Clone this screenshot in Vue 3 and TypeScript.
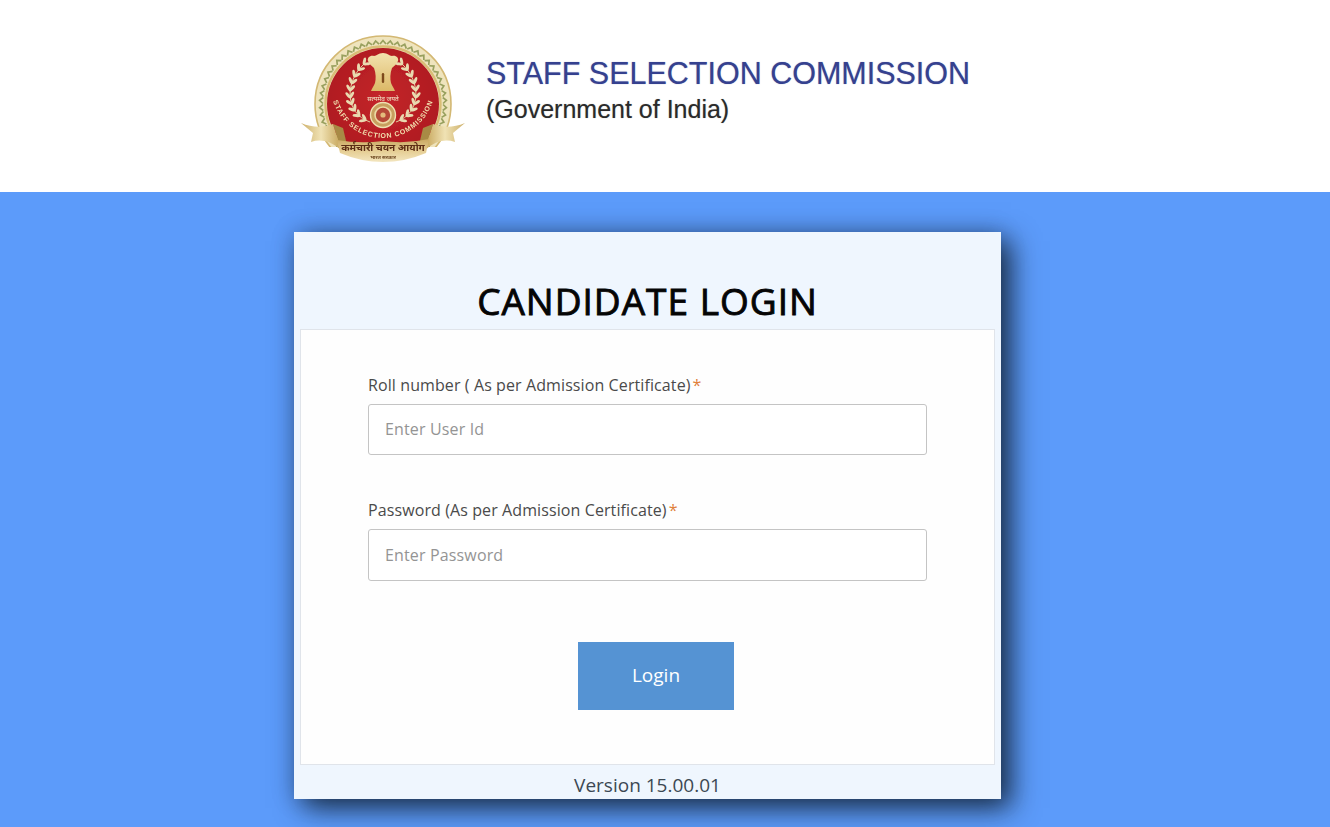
<script setup lang="ts">
import { ref } from 'vue'

interface Leaf {
  x: number
  y: number
  angle: number
}

const rollNumber = ref<string>('')
const password = ref<string>('')

const chevrons: number[] = Array.from({ length: 54 }, (_, i) => (i * 360) / 54)

// One half of the wreath: leaf pairs set along a cubic curve.
const curve: number[][] = [[70, 89], [44, 80], [45, 48], [64, 31]]
const leaves: Leaf[] = Array.from({ length: 10 }, (_, i) => {
  const t = 0.06 + i * 0.104
  const u = 1 - t
  const [a, b, c, d] = curve
  const x = u * u * u * a[0] + 3 * u * u * t * b[0] + 3 * u * t * t * c[0] + t * t * t * d[0]
  const y = u * u * u * a[1] + 3 * u * u * t * b[1] + 3 * u * t * t * c[1] + t * t * t * d[1]
  const dx = 3 * u * u * (b[0] - a[0]) + 6 * u * t * (c[0] - b[0]) + 3 * t * t * (d[0] - c[0])
  const dy = 3 * u * u * (b[1] - a[1]) + 6 * u * t * (c[1] - b[1]) + 3 * t * t * (d[1] - c[1])
  return { x, y, angle: (Math.atan2(dy, dx) * 180) / Math.PI }
})
</script>

<template>
  <div class="page">
    <header class="header">
      <div class="brand">
        <svg class="emblem" width="170" height="131" viewBox="0 0 170 131" aria-hidden="true">
          <defs>
            <radialGradient id="red" cx="0.5" cy="0.45" r="0.6">
              <stop offset="0" stop-color="#c4262b" />
              <stop offset="1" stop-color="#ac181e" />
            </radialGradient>
            <linearGradient id="band" x1="0" y1="0" x2="0" y2="1">
              <stop offset="0" stop-color="#c9a862" />
              <stop offset="0.55" stop-color="#e6cf96" />
              <stop offset="1" stop-color="#f3e6c0" />
            </linearGradient>
            <linearGradient id="wingL" x1="0" y1="0" x2="1" y2="0">
              <stop offset="0" stop-color="#cdb06a" />
              <stop offset="0.5" stop-color="#f0e2b4" />
              <stop offset="1" stop-color="#c6a559" />
            </linearGradient>
            <linearGradient id="ash" x1="0" y1="0" x2="0" y2="1">
              <stop offset="0" stop-color="#f2e2ae" />
              <stop offset="1" stop-color="#dcb867" />
            </linearGradient>
            <clipPath id="aboveBand">
              <rect x="0" y="0" width="170" height="114" />
            </clipPath>
            <path id="arc" d="M31.8 44A52 52 0 1 0 134.2 44" fill="none" />
            <filter id="soft" x="-5%" y="-5%" width="110%" height="110%">
              <feGaussianBlur stdDeviation="0.45" />
            </filter>
            <g id="wreath">
              <path d="M70 89C44 80 45 48 64 31" fill="none" stroke="#e0cf9f" stroke-width="1" />
              <g fill="#e9dab0">
                <template v-for="(l, i) in leaves" :key="i">
                  <ellipse
                    :cx="l.x"
                    :cy="l.y"
                    rx="3.8"
                    ry="1.5"
                    :transform="`rotate(${l.angle - 36} ${l.x} ${l.y}) translate(3 0)`"
                  />
                  <ellipse
                    :cx="l.x"
                    :cy="l.y"
                    rx="3.8"
                    ry="1.5"
                    :transform="`rotate(${l.angle + 36} ${l.x} ${l.y}) translate(3 0)`"
                  />
                </template>
              </g>
            </g>
            <path id="wing" d="M1 90Q18 97 33 91L41 117Q26 104 11 109L13 100Z" />
          </defs>
          <g filter="url(#soft)">
            <g clip-path="url(#aboveBand)">
              <circle cx="83" cy="71" r="68" fill="#efe4bd" stroke="#d3b873" stroke-width="1.6" />
              <g fill="none" stroke="#98a05e" stroke-width="1.7">
                <path
                  v-for="a in chevrons"
                  :key="a"
                  d="M80 11L83 7.5L86 11"
                  :transform="`rotate(${a} 83 71)`"
                />
              </g>
              <circle cx="83" cy="71" r="57.5" fill="none" stroke="#d9bd76" stroke-width="2.4" />
              <circle cx="83" cy="71" r="56" fill="url(#red)" />
            </g>

            <path
              d="M83 20C78 20 77 23 74 23C70 22 67 25 68 28C69 31 72 33 74 35C76 40 76 46 75 50C74 53 72 55 71 58L95 58C94 55 92 53 91 50C90 46 90 40 92 35C94 33 97 31 98 28C99 25 96 22 92 23C89 23 88 20 83 20Z"
              fill="url(#ash)"
            />
            <rect x="81.8" y="40" width="2.4" height="10" rx="1.2" fill="#7d4a1d" />

            <text x="83" y="68" text-anchor="middle" class="motto">सत्यमेव जयते</text>

            <use href="#wreath" />
            <use href="#wreath" transform="translate(166 0) scale(-1 1)" />

            <circle cx="83" cy="82" r="12.5" fill="#c79f5e" stroke="#efe0b2" stroke-width="1.4" />
            <circle cx="83" cy="82" r="8" fill="#b64a38" stroke="#ecd9a4" stroke-width="1.6" />
            <circle cx="83" cy="82" r="2.6" fill="#e3bc7c" />

            <text class="arc-text">
              <textPath href="#arc" startOffset="50%" text-anchor="middle">STAFF SELECTION COMMISSION</textPath>
            </text>

            <path d="M33 91L41 117L47 112L43 95Z" fill="#a88a45" />
            <path d="M133 91L125 117L119 112L123 95Z" fill="#a88a45" />
            <use href="#wing" fill="url(#wingL)" />
            <use href="#wing" fill="url(#wingL)" transform="translate(166 0) scale(-1 1)" />
            <path
              d="M37 107Q60 111 83 108Q106 111 129 106L126 120Q105 129 83 129Q61 129 40 120Z"
              fill="url(#band)"
            />
            <text x="83" y="117.5" text-anchor="middle" class="ribbon-text">कर्मचारी चयन आयोग</text>
            <text x="83" y="125.5" text-anchor="middle" class="ribbon-sub">भारत सरकार</text>
          </g>
        </svg>
        <div class="brand-text">
          <div class="brand-title">STAFF SELECTION COMMISSION</div>
          <div class="brand-sub">(Government of India)</div>
        </div>
      </div>
    </header>

    <main class="main">
      <section class="card">
        <h1 class="title">CANDIDATE LOGIN</h1>
        <form class="panel" @submit.prevent>
          <div class="field">
            <label class="label" for="roll">Roll number ( As per Admission Certificate)<span class="req">*</span></label>
            <input id="roll" v-model="rollNumber" class="input input-first" type="text" placeholder="Enter User Id" />
          </div>
          <div class="field">
            <label class="label" for="pass">Password (As per Admission Certificate)<span class="req">*</span></label>
            <input id="pass" v-model="password" class="input input-tall" type="password" placeholder="Enter Password" />
          </div>
          <div class="actions">
            <button class="login" type="submit">Login</button>
          </div>
        </form>
        <div class="version">Version 15.00.01</div>
      </section>
    </main>
  </div>
</template>

<style>
html,
body {
  margin: 0;
  padding: 0;
  overflow: hidden;
  background: #5c9bfa;
}
</style>

<style scoped>
.page {
  width: 1330px;
  height: 827px;
  display: flex;
  flex-direction: column;
  overflow: hidden;
  background: #5c9bfa;
  font-family: "Open Sans", "Noto Sans", sans-serif;
}

.header {
  height: 192px;
  flex: none;
  background: #ffffff;
  display: flex;
  align-items: flex-start;
  padding: 33px 0 0 300px;
  box-sizing: border-box;
}

.brand {
  display: flex;
  align-items: flex-start;
  gap: 16px;
}

.emblem {
  flex: none;
}

.brand-text {
  padding-top: 22px;
  font-family: "Liberation Sans", Arial, sans-serif;
}

.brand-title {
  font-size: 30.5px;
  line-height: 36px;
  color: #35418f;
  white-space: nowrap;
  text-shadow: 0 0 1px rgba(53, 65, 143, 0.55);
}

.brand-sub {
  font-size: 25px;
  line-height: 36px;
  color: #2a2a2a;
  white-space: nowrap;
  text-shadow: 0 0 1px rgba(42, 42, 42, 0.4);
}

.motto {
  font-family: "Noto Sans", "Liberation Sans", sans-serif;
  font-size: 6.5px;
  fill: #f3e8c8;
}

.arc-text {
  font-family: "Liberation Sans", sans-serif;
  font-size: 7px;
  font-weight: 700;
  letter-spacing: 0.8px;
  fill: #f1dfae;
}

.ribbon-text {
  font-family: "Noto Sans", "Liberation Sans", sans-serif;
  font-size: 10px;
  font-weight: 700;
  fill: #5b2d14;
}

.ribbon-sub {
  font-family: "Noto Sans", "Liberation Sans", sans-serif;
  font-size: 5px;
  font-weight: 700;
  fill: #6f4a22;
}

.main {
  flex: 1;
  padding: 40px 0 0 294px;
  box-sizing: border-box;
}

.card {
  width: 707px;
  height: 567px;
  box-sizing: border-box;
  padding: 0 6px;
  background: #eff6fe;
  box-shadow: 10px 9px 26px rgba(10, 20, 30, 0.78), 0 0 22px rgba(10, 20, 40, 0.22);
  display: flex;
  flex-direction: column;
}

.title {
  margin: 0;
  height: 97px;
  flex: none;
  box-sizing: border-box;
  padding-top: 45px;
  text-align: center;
  font-size: 37px;
  line-height: 48px;
  font-weight: 400;
  letter-spacing: 1px;
  -webkit-text-stroke: 0.9px #050505;
  color: #050505;
}

.panel {
  height: 436px;
  flex: none;
  box-sizing: border-box;
  background: #fefefe;
  border: 1px solid #e0e4ea;
  padding: 0 67px;
  display: flex;
  flex-direction: column;
}

.field {
  padding-top: 44px;
}

.label {
  display: block;
  font-size: 16px;
  line-height: 22px;
  letter-spacing: 0.1px;
  color: #4a4a4a;
  margin-bottom: 8px;
}

.req {
  color: #e0803a;
  margin-left: 2px;
}

.input {
  display: block;
  width: 559px;
  height: 51px;
  box-sizing: border-box;
  padding: 0 16px;
  background: #ffffff;
  border: 1px solid #c4c4c4;
  border-radius: 3px;
  font-family: inherit;
  font-size: 16px;
  letter-spacing: 0.15px;
  color: #333333;
  outline: none;
}

.input-first {
  padding-bottom: 2px;
}

.input-tall {
  height: 52px;
}

.input::placeholder {
  color: #949494;
  opacity: 1;
}

.actions {
  padding: 61px 0 0 210px;
}

.login {
  display: block;
  width: 156px;
  height: 68px;
  padding: 0 0 2px;
  border: none;
  background: #5593d3;
  color: #ffffff;
  font-family: inherit;
  font-size: 19px;
  cursor: pointer;
}

.version {
  height: 34px;
  flex: none;
  text-align: center;
  font-size: 19px;
  line-height: 40px;
  color: #3c4853;
}
</style>
